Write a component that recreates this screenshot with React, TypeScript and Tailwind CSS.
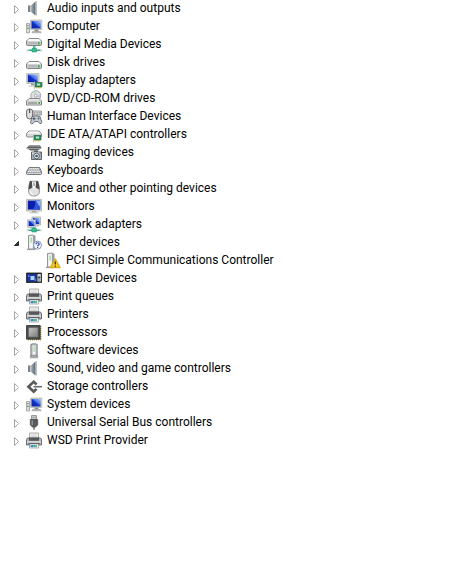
import type { ReactNode } from "react";

function Icon({ children }: { children: ReactNode }) {
  return (
    <svg className="h-4 w-4 shrink-0 overflow-visible" viewBox="0 0 16 16" fill="none" aria-hidden="true">
      {children}
    </svg>
  );
}

function Defs() {
  return (
    <svg className="absolute h-0 w-0" aria-hidden="true">
      <defs>
        <linearGradient id="screen" x1="0" y1="1" x2="1" y2="0">
          <stop offset="0" stopColor="#0a1a9c" />
          <stop offset="0.5" stopColor="#1535c8" />
          <stop offset="0.55" stopColor="#3f6cec" />
          <stop offset="1" stopColor="#a9c8fb" />
        </linearGradient>
        <linearGradient id="metal" x1="0" y1="0" x2="0" y2="1">
          <stop offset="0" stopColor="#f6f6f6" />
          <stop offset="1" stopColor="#a3a5a8" />
        </linearGradient>
        <linearGradient id="cone" x1="0" y1="0" x2="1" y2="0">
          <stop offset="0" stopColor="#cfd4d8" />
          <stop offset="0.6" stopColor="#7d858b" />
          <stop offset="1" stopColor="#626b73" />
        </linearGradient>
        <linearGradient id="chip" x1="0" y1="0" x2="1" y2="1">
          <stop offset="0" stopColor="#c9c9c9" />
          <stop offset="1" stopColor="#7b7b7b" />
        </linearGradient>
      </defs>
    </svg>
  );
}

function SpeakerIcon() {
  return (
    <Icon>
      <path d="M2 4.500h3v6.500H2z" fill="#7b838a" />
      <path d="M4 4.500h1l4.500-4v14L5 11H4z" fill="url(#cone)" />
      <path d="M9 .8 10.800.3v14.200L9 14z" fill="#9fb0bd" />
    </Icon>
  );
}

function ComputerIcon() {
  return (
    <Icon>
      <path d="M.5 4.500h3v9.500h-3z" fill="#dcdcdc" stroke="#9a9a9a" strokeWidth=".8" />
      <path d="M1.200 6h1.600v1H1.200z" fill="#8d8d8d" />
      <path d="M1.200 8.500h1.400v1.500H1.200z" fill="#3fae3f" />
      <path d="M4.500 1h11.300v9.500H4.500z" fill="#d5d5cf" stroke="#a9a9a4" strokeWidth=".6" />
      <path d="M5.500 2h9.300v7.500H5.500z" fill="url(#screen)" />
      <path d="M8.500 10.500h4v2h-4z" fill="#8f8f8f" />
      <path d="M6.500 12.500h8l.7 1.300H5.800z" fill="#bdbdbd" stroke="#8c8c8c" strokeWidth=".5" />
    </Icon>
  );
}

function DriveShape() {
  return (
    <>
      <path d="M3 6.500h10L15.500 9v3.500q0 1-1 1h-13q-1 0-1-1V9z" fill="url(#metal)" stroke="#77797c" strokeWidth=".9" />
      <path d="M3.300 7h9.400l1.800 2H1.500z" fill="#fafafa" />
      <path d="M1 10h14v3H1z" fill="#c4c6c8" />
      <path d="M3 11h8" stroke="#9fa1a4" strokeWidth=".8" />
      <path d="M12 10h1.500v2.500H12z" fill="#29b52e" />
    </>
  );
}

function MediaIcon() {
  return (
    <Icon>
      <g transform="translate(0 -5)">
        <DriveShape />
      </g>
      <path d="M7 9h2.500v4H7z" fill="#4cc09a" />
      <path d="M2 12.500h13v1.500H2z" fill="#2eaf83" />
      <path d="M6 11.500h4.500v3.500H6z" fill="#37c18f" stroke="#178a62" strokeWidth=".5" />
      <path d="M.5 12.500H3v2H.5zM14 12.500h2v2h-2z" fill="#c6d3d0" />
    </Icon>
  );
}

function DiskIcon() {
  return (
    <Icon>
      <DriveShape />
    </Icon>
  );
}

function CardShape() {
  return (
    <>
      <path d="M9 9.500h7v4.500H9z" fill="#2d9561" stroke="#17623f" strokeWidth=".7" />
      <path d="M11 10.500h3v2h-3z" fill="#c4dfd0" />
      <path d="M10 14.300h5v1h-5z" fill="#d0b13a" />
      <path d="M8.500 8.500v7.500" stroke="#b5b5b5" strokeWidth=".9" />
    </>
  );
}

function DisplayIcon() {
  return (
    <Icon>
      <path d="M.6.500h12.500v10H.6z" fill="#d8d8d2" stroke="#a9a9a4" strokeWidth=".6" />
      <path d="M1.800 1.500h10v7.700h-10z" fill="url(#screen)" />
      <path d="M5 10.500h3v2H5z" fill="#9f9f9f" />
      <path d="M2.500 12.500h6v1.200h-6z" fill="#c9c9c9" />
      <CardShape />
    </Icon>
  );
}

function DiscDriveIcon() {
  return (
    <Icon>
      <circle cx="9.800" cy="4.700" r="5" fill="#dfe3e1" stroke="#8c9196" strokeWidth=".8" />
      <path d="M9.800 4.700 7 .8a5 5 0 0 1 3-.9z" fill="#b9dfc2" />
      <path d="M9.800 4.700 14 7a5 5 0 0 0 .5-3z" fill="#c7bfe4" />
      <circle cx="9.800" cy="4.700" r="1.400" fill="#fff" stroke="#8c9196" strokeWidth=".7" />
      <path d="M3 7.500h10l2.500 2.500v4H.500v-4z" fill="url(#metal)" stroke="#777a7d" strokeWidth=".9" />
      <path d="M1 10.500h14v3H1z" fill="#d3d5d5" />
      <path d="M2 12h9" stroke="#777" strokeWidth="1" />
      <path d="M12.500 11H14v2h-1.500z" fill="#29b52e" />
    </Icon>
  );
}

function HumanIcon() {
  return (
    <Icon>
      <path d="M.6 2q0-2 3-2t3 2v5q0 3-3 3t-3-3z" fill="#dedede" stroke="#62666a" strokeWidth="1" />
      <path d="M3.600 0v4" stroke="#55595c" strokeWidth="1.200" />
      <path d="M7 2h8.500v4H7z" fill="#d8d8d8" stroke="#888b8e" strokeWidth=".8" />
      <path d="M8 3.500h7M8 5h7" stroke="#777" strokeWidth=".6" strokeDasharray="1 .6" />
      <path d="M6 7.500q4-1.500 8 0l1.800 6q-.5 2-2.300.8L12 12.500H8.500l-1.500 2q-2 1-2.500-.7z" fill="#c5cbd2" stroke="#5e666f" strokeWidth=".9" />
      <path d="M6.500 9.700h3M8 8.200v3" stroke="#3f454b" strokeWidth=".9" />
      <circle cx="12.500" cy="9.500" r="1.100" fill="#5a7390" />
    </Icon>
  );
}

function IdeIcon() {
  return (
    <Icon>
      <path d="M3 4h10l2.500 2.500V9q0 1-1 1h-13q-1 0-1-1V6.500z" fill="#d4d6d8" stroke="#808386" strokeWidth=".9" />
      <path d="M3.300 4.500h9.400l1.800 2H1.500z" fill="#fafafa" />
      <g transform="translate(-1 -1)">
        <CardShape />
      </g>
    </Icon>
  );
}

function ImagingIcon() {
  return (
    <Icon>
      <path d="M3 .500h11l1.500 2.500-4 2.500h-7L.5 3z" fill="#5c6063" />
      <path d="M3 .500h11l.8 1.300H1.800z" fill="#8a8e91" />
      <path d="M.5 3h15v.8H.5z" fill="#a9adb0" />
      <path d="M5.500 7h10v7.500h-10z" fill="#a7afb6" stroke="#53595e" strokeWidth=".9" />
      <path d="M8 5.500h4V7H8z" fill="#5a5f64" />
      <path d="M6 7.500h9V9H6z" fill="#d8dde1" />
      <circle cx="10.500" cy="11" r="2.800" fill="#e3e8ec" stroke="#484d52" strokeWidth=".8" />
      <circle cx="10.500" cy="11" r="1.300" fill="#3d5871" />
      <path d="M13.500 7.500H15v1h-1.500z" fill="#444" />
    </Icon>
  );
}

function KeyboardIcon() {
  return (
    <Icon>
      <path d="M3 4.500h10.500l2 4v2q0 1-1 1h-13q-1 0-1-1v-2z" fill="#a4a7aa" stroke="#6c6f72" strokeWidth=".9" />
      <path d="M3.500 5.500h9.500M2.800 7h10.700M2 8.500h12" stroke="#fff" strokeWidth=".9" strokeDasharray="1.200 .6" />
      <path d="M1 10.500h14" stroke="#d3d6d9" strokeWidth="1" />
    </Icon>
  );
}

function MouseIcon() {
  return (
    <Icon>
      <path d="M4 .300h8q2 6 1.300 11-.6 3.700-5.300 3.700t-5.300-3.700Q2 6.300 4 .300z" fill="#e2e2e2" stroke="#7b7b7b" strokeWidth=".8" />
      <path d="M4 .3 6 .2 6.800 6.500 2.700 8.500Q2.500 4 4 .3zM10 .2l2 .1q1.500 3.700 1.300 8.200L9.200 6.500z" fill="#4c4c4c" />
      <path d="M6 .8h4l-.5 5.500L8 8 6.500 6.300z" fill="#f5f5f5" />
      <path d="M7.500 1.500h1v3.500h-1z" fill="#7b7b7b" />
      <path d="M4 10q1 3.500 3.500 4" stroke="#fff" strokeWidth="1" />
    </Icon>
  );
}

function MonitorIcon() {
  return (
    <Icon>
      <path d="M.5.500h15v11.500H.5z" fill="#d9d9d1" stroke="#a8a89f" strokeWidth=".7" />
      <path d="M1.800 1.600h12.400v9H1.800z" fill="#0b1ea8" />
      <path d="M9 1.600h5.200v9H6.500q3.500-3 2.500-9z" fill="#2b55e0" />
      <path d="M9.800 1.600h4.400v6.400q-2.500-2.500-4.400-6.400z" fill="#8fb2fa" />
      <path d="M6 12h4v1.500H6z" fill="#a2a29c" />
      <path d="M3.500 13.300h9v1h-9z" fill="#bdbdb6" />
    </Icon>
  );
}

function NetworkIcon() {
  return (
    <Icon>
      <path d="M6 0h8.500v8H6z" fill="#dcdcd8" stroke="#9f9f9f" strokeWidth=".7" />
      <path d="M7 1h6.500v6H7z" fill="url(#screen)" />
      <path d="M1.600 2.800h8v7.500h-8z" fill="#e9e9e5" stroke="#9f9f9f" strokeWidth=".7" />
      <path d="M2.600 3.800h6v5.300h-6z" fill="url(#screen)" />
      <path d="M4 10.300h3v1H4zM10.500 8.300H13v1h-2.500z" fill="#aaa" />
      <path d="M7 10h2.500v3H7z" fill="#4cc09a" />
      <path d="M2 12.500h12V14H2z" fill="#2eaf83" />
      <path d="M5.800 11.500h4.600v3.500H5.800z" fill="#37c18f" stroke="#178a62" strokeWidth=".5" />
      <path d="M.5 12.300H3v2H.5zM13.500 12.300h2v2h-2z" fill="#c6d3d0" />
    </Icon>
  );
}

function CaseShape() {
  return (
    <>
      <path d="M2.500.500 6.500 0l2.500 1v13H2.500z" fill="#d4d6d6" stroke="#7e8183" strokeWidth=".8" />
      <path d="M3.300 1.300h3.400v12H3.300z" fill="#f7f7f7" />
      <path d="M4.600 2.500h1v5h-1z" fill="#7fc97a" />
      <path d="M7.900 1v12.500" stroke="#8e9193" strokeWidth="1.400" />
      <path d="M1 14.500h8.500" stroke="#9a9c9d" strokeWidth="1.200" />
    </>
  );
}

function UnknownIcon() {
  return (
    <Icon>
      <CaseShape />
      <circle cx="11.500" cy="10.200" r="4" fill="#f3f6fb" stroke="#7f8fae" strokeWidth=".9" />
      <path d="M10 9.300q0-1.600 1.600-1.600t1.600 1.300q0 .8-.9 1.300-.6.300-.6 1M11.700 12v1.100" stroke="#1d3fae" strokeWidth="1.100" />
    </Icon>
  );
}

function WarningIcon() {
  return (
    <Icon>
      <CaseShape />
      <path d="M10.300 6 15 14.500H5.500z" fill="#fbd02c" stroke="#d9ab14" strokeWidth="1.400" strokeLinejoin="round" />
      <path d="M10.300 8.500v3M10.300 12.500v1.300" stroke="#2e2600" strokeWidth="1.200" />
    </Icon>
  );
}

function PortableIcon() {
  return (
    <Icon>
      <path d="M.5 2h15v9.500H.5z" fill="#2b2e31" stroke="#1b1d1f" strokeWidth=".8" />
      <path d="M1.500 3.200h9v7.200h-9z" fill="#1336a8" />
      <path d="M4.500 5h4v4h-4z" fill="#b9d2fa" />
      <path d="M2 4h1.500v2H2zM8.500 7.500H10v2.500H8.500z" fill="#4d7dec" />
      <path d="M11.500 3h3.300v7.500h-3.300z" fill="#d5dae0" />
      <circle cx="13.100" cy="6.500" r="1.200" fill="#4a4f55" />
      <path d="M12.200 9h1.800" stroke="#4a4f55" strokeWidth=".8" />
    </Icon>
  );
}

function PrinterIcon() {
  return (
    <Icon>
      <path d="M3.500 0h9v6h-9z" fill="#f4f4f4" stroke="#9b9b9b" strokeWidth=".8" />
      <path d="M5 2h6M5 3.500h6" stroke="#c6c6c6" strokeWidth=".7" />
      <path d="M1.500 5h13l1 1.500v5.500h-15V6.500z" fill="#b3b5b7" stroke="#5f6265" strokeWidth=".9" />
      <path d="M3 4.500h10v3.300H3z" fill="#56595c" />
      <path d="M1 8.300h14v1.200H1z" fill="#e4e4e4" />
      <path d="M2.500 10h11v1.500h-11z" fill="#4c4f52" />
      <path d="M3.500 11h9v4h-9z" fill="#fafafa" stroke="#8d8d8d" strokeWidth=".7" />
      <path d="M4.500 12h3.300v2.200H4.500z" fill="#3c8fd0" />
      <path d="M7.800 12h3.200v2.200H7.800z" fill="#59b78d" />
    </Icon>
  );
}

function ProcessorIcon() {
  return (
    <Icon>
      <path d="M14.800 1v13" stroke="#c3a13b" strokeWidth="1.500" strokeDasharray="1 1" />
      <path d="M2 14.800h13" stroke="#c3a13b" strokeWidth="1.500" strokeDasharray="1 1" />
      <path d="M.5.500h13.700v13.700H.5z" fill="#4a4a4a" stroke="#303030" strokeWidth=".8" />
      <path d="M2.800 2.800h9v9h-9z" fill="url(#chip)" stroke="#8a8a8a" strokeWidth=".5" />
    </Icon>
  );
}

function SoftwareIcon() {
  return (
    <Icon>
      <path d="M5 1.500 6 1h4.500l.5.500V13H5z" fill="#ececec" stroke="#606365" strokeWidth="1" />
      <path d="M6.500 2.500h3v9h-3z" fill="#fafafa" stroke="#b9bbbc" strokeWidth=".6" />
      <path d="M7.600 3.500h.9V9h-.9z" fill="#7fc97a" />
      <path d="M4.300 13h7.400v1.800H4.300z" fill="#b4b6b7" stroke="#7c7f81" strokeWidth=".6" />
    </Icon>
  );
}

function StorageIcon() {
  return (
    <Icon>
      <path d="M7.700 1 .5 7.700l7.200 6.700 3.800-3.600-1.900-1.800-1.900 1.800-3.300-3.100 3.300-3.100 1.900 1.800 1.900-1.800z" fill="#58595b" />
      <path d="M7.500 6.900H16v1.600H7.500z" fill="#6b6c6e" />
    </Icon>
  );
}

function UsbIcon() {
  return (
    <Icon>
      <path d="M5.500.500h5V5h-5z" fill="#d5d5d5" stroke="#878787" strokeWidth=".8" />
      <path d="M6.600 1.500h1v2h-1zM8.600 1.500h1v2h-1z" fill="#8a8a8a" />
      <path d="M4.300 4.500h7.400v5.500L9.500 12h-3L4.300 10z" fill="#58595b" stroke="#444" strokeWidth=".7" />
      <path d="M5.500 5.500h1.500v4.500H5.500z" fill="#8f9092" />
      <path d="M7.200 12h1.600v2.800H7.200z" fill="#6b6b6b" />
    </Icon>
  );
}

type Device = {
  label: string;
  icon: () => ReactNode;
  children?: Device[];
};

const devices: Device[] = [
  { label: "Audio inputs and outputs", icon: SpeakerIcon },
  { label: "Computer", icon: ComputerIcon },
  { label: "Digital Media Devices", icon: MediaIcon },
  { label: "Disk drives", icon: DiskIcon },
  { label: "Display adapters", icon: DisplayIcon },
  { label: "DVD/CD-ROM drives", icon: DiscDriveIcon },
  { label: "Human Interface Devices", icon: HumanIcon },
  { label: "IDE ATA/ATAPI controllers", icon: IdeIcon },
  { label: "Imaging devices", icon: ImagingIcon },
  { label: "Keyboards", icon: KeyboardIcon },
  { label: "Mice and other pointing devices", icon: MouseIcon },
  { label: "Monitors", icon: MonitorIcon },
  { label: "Network adapters", icon: NetworkIcon },
  {
    label: "Other devices",
    icon: UnknownIcon,
    children: [{ label: "PCI Simple Communications Controller", icon: WarningIcon }],
  },
  { label: "Portable Devices", icon: PortableIcon },
  { label: "Print queues", icon: PrinterIcon },
  { label: "Printers", icon: PrinterIcon },
  { label: "Processors", icon: ProcessorIcon },
  { label: "Software devices", icon: SoftwareIcon },
  { label: "Sound, video and game controllers", icon: SpeakerIcon },
  { label: "Storage controllers", icon: StorageIcon },
  { label: "System devices", icon: ComputerIcon },
  { label: "Universal Serial Bus controllers", icon: UsbIcon },
  { label: "WSD Print Provider", icon: PrinterIcon },
];

function Expander({ open, label }: { open: boolean; label: string }) {
  return (
    <button type="button" aria-label={label} aria-expanded={open} className="mr-0.5 h-4 w-3 shrink-0">
      <svg className="h-4 w-3" viewBox="0 0 12 16" fill="none" aria-hidden="true">
        {open ? (
          <path d="M6.500 6.500v4h-4z" fill="#404040" stroke="#262626" />
        ) : (
          <path d="M2.500 4.500v8l4-4z" fill="#fff" stroke="#a6a6a6" />
        )}
      </svg>
    </button>
  );
}

function Row({ device }: { device: Device }) {
  const DeviceIcon = device.icon;
  return (
    <div className="flex h-[18px] items-center">
      <DeviceIcon />
      <span className="ml-[5px] pb-0.5 text-[12px] leading-4 whitespace-nowrap">{device.label}</span>
    </div>
  );
}

export default function App() {
  return (
    <main className="min-h-screen overflow-x-hidden bg-white pl-3 font-[Roboto,'Open_Sans',sans-serif] text-black">
      <Defs />
      <ul>
        {devices.map((device) => (
          <li key={device.label}>
            <div className="flex items-center">
              <Expander open={!!device.children} label={device.label} />
              <Row device={device} />
            </div>
            {device.children && (
              <ul className="pl-[33px]">
                {device.children.map((child) => (
                  <li key={child.label}>
                    <Row device={child} />
                  </li>
                ))}
              </ul>
            )}
          </li>
        ))}
      </ul>
    </main>
  );
}
